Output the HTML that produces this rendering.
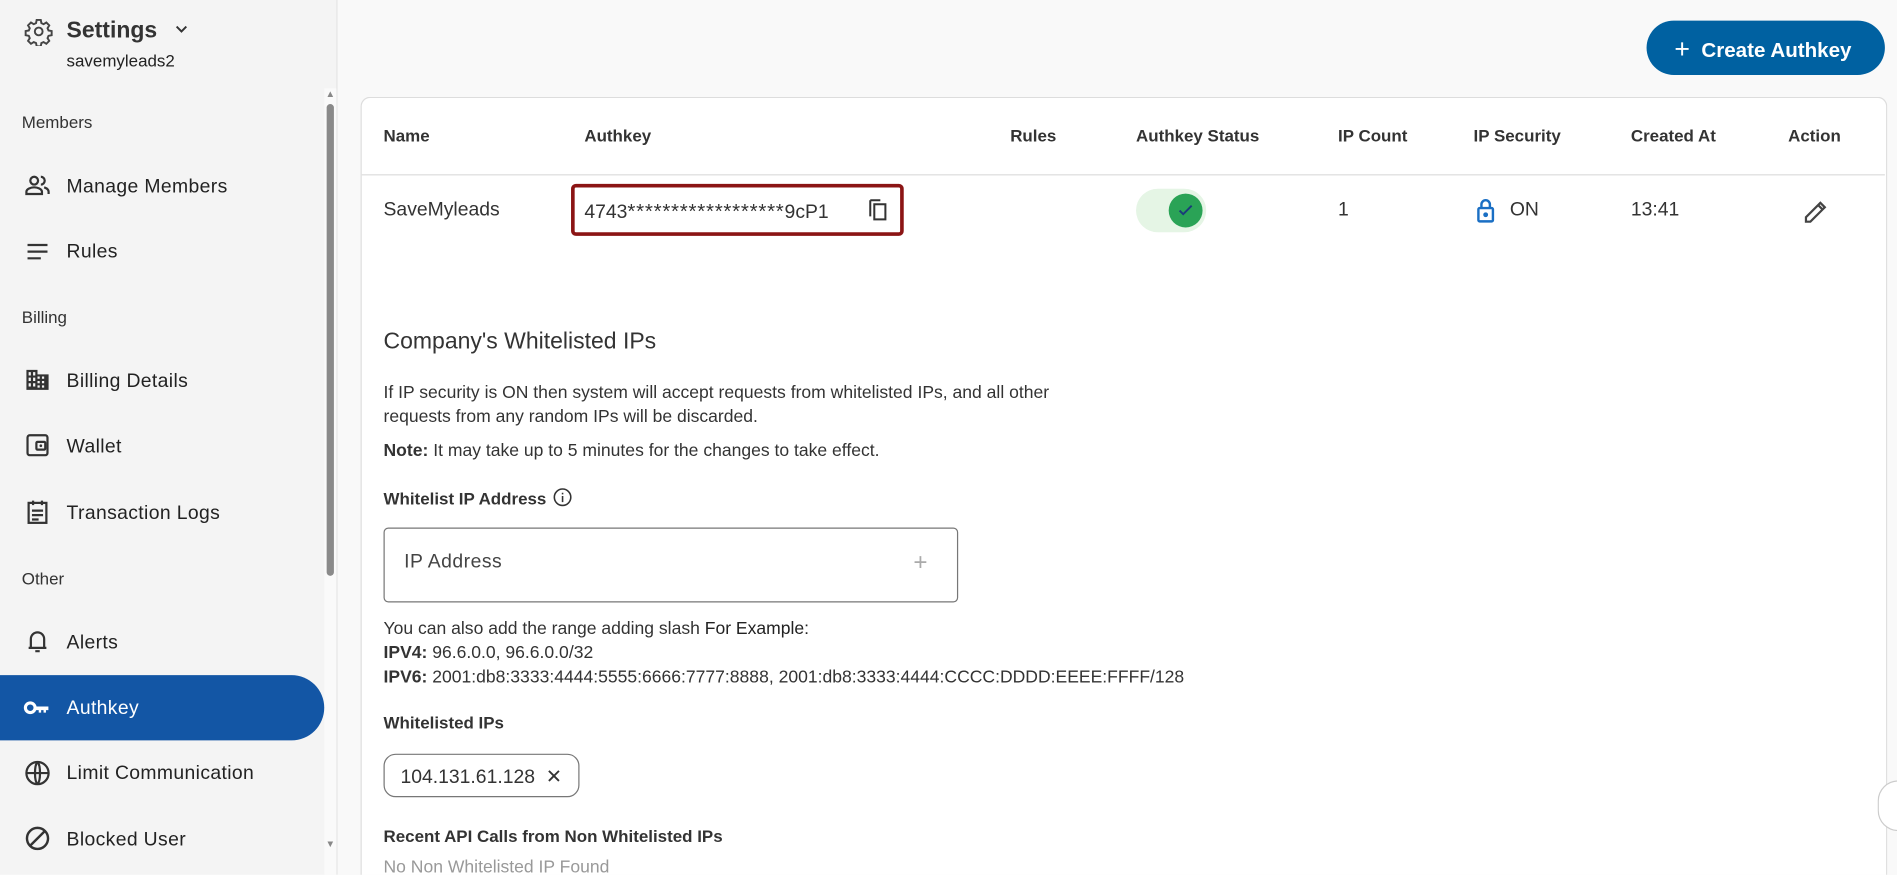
<!DOCTYPE html>
<html><head><meta charset="utf-8"><style>
html,body{margin:0;padding:0;width:1897px;height:875px;overflow:hidden;background:#f9f9f9}
#clip{position:absolute;left:0;top:0;width:1897px;height:875px;overflow:hidden}
#w{position:absolute;left:0;top:0;width:1568px;height:723px;overflow:hidden;transform:scale(1.20982);transform-origin:0 0;font-family:"Liberation Sans",sans-serif;color:#333}
.a{position:absolute;white-space:nowrap}
.sb{position:absolute;left:0;top:0;width:278px;height:723px;background:#f4f4f4;border-right:1px solid #e4e4e4}
.sec{font-size:14px;color:#333;left:18px}
.it{font-size:16px;color:#222;left:55px;letter-spacing:.3px}
.ic{position:absolute;left:20px}
.th{font-size:14px;font-weight:bold;color:#333;top:104px}
.td{font-size:16px;color:#333;top:165px}
.p{font-size:14.5px;color:#333}
</style></head><body><div id="clip"><div id="w">
<div class="sb"></div>
<svg class="a" style="left:20px;top:14px" width="24" height="24" viewBox="0 0 24 24" fill="none" stroke="#444" stroke-width="1.6"><circle cx="12" cy="12" r="3.2"/><path d="M10.3 2.5h3.4l.5 2.6 1.8.9 2.3-1.4 2.4 2.4-1.4 2.3.8 1.9 2.6.5v3.4l-2.6.5-.8 1.9 1.4 2.3-2.4 2.4-2.3-1.4-1.8.8-.5 2.7h-3.4l-.5-2.7-1.9-.8-2.3 1.4-2.4-2.4 1.4-2.3-.8-1.9-2.6-.5v-3.4l2.6-.5.8-1.9-1.4-2.3 2.4-2.4 2.3 1.4 1.9-.9z"/></svg>
<div class="a" style="left:55px;top:15px;font-size:19px;font-weight:bold;color:#333">Settings</div>
<svg class="a" style="left:144px;top:19px" width="12" height="10" viewBox="0 0 12 10"><path d="M2 3l4 4 4-4" fill="none" stroke="#333" stroke-width="1.6"/></svg>
<div class="a" style="left:55px;top:42px;font-size:14px;color:#222">savemyleads2</div>
<div class="a" style="left:268px;top:73px;width:10px;height:650px;background:#fafafa"></div>
<div class="a" style="left:270px;top:86px;width:6px;height:390px;background:#8a8a8a;border-radius:3px"></div>
<div class="a" style="left:269px;top:73px;font-size:8px;color:#888">▲</div>
<div class="a" style="left:269px;top:693px;font-size:8px;color:#888">▼</div>
<div class="a sec" style="top:93px">Members</div>
<div class="a sec" style="top:254px">Billing</div>
<div class="a sec" style="top:470px">Other</div>
<svg class="ic a" style="top:142px" width="22" height="22" viewBox="0 0 24 24"><circle cx="9" cy="8" r="3.5" fill="none" stroke="#333" stroke-width="2"/><path d="M2 20v-2c0-2.5 4-4 7-4s7 1.5 7 4v2z" fill="none" stroke="#333" stroke-width="2"/><path d="M15 4.5a3.5 3.5 0 010 7M18 14c2 .7 4 2 4 4v2" fill="none" stroke="#333" stroke-width="2"/></svg>
<div class="a it" style="top:146px">Manage Members</div>
<svg class="ic a" style="top:197px" width="22" height="22" viewBox="0 0 24 24"><path d="M3 6h18M3 12h18M3 18h12" stroke="#333" stroke-width="2"/></svg>
<div class="a it" style="top:200px">Rules</div>
<svg class="ic a" style="top:303px" width="22" height="22" viewBox="0 0 24 24" fill="#333"><path d="M2 3h10v4h10v14H2z M4 5v3h2V5zm4 0v3h2V5zM4 10v3h2v-3zm4 0v3h2v-3zM4 15v3h2v-3zm4 0v3h2v-3zm4-6v2h2V9zm0 4v2h2v-2zm4-4v2h2V9zm0 4v2h2v-2zm-4 4v2h2v-2zm4 0v2h2v-2z" fill-rule="evenodd"/></svg>
<div class="a it" style="top:307px">Billing Details</div>
<svg class="ic a" style="top:357px" width="22" height="22" viewBox="0 0 24 24"><rect x="3" y="3" width="18" height="18" rx="2" fill="none" stroke="#333" stroke-width="2"/><rect x="11" y="9" width="8" height="7" rx="1" fill="none" stroke="#333" stroke-width="2"/><circle cx="15" cy="12.5" r="1.2" fill="#333"/></svg>
<div class="a it" style="top:361px">Wallet</div>
<svg class="ic a" style="top:412px" width="22" height="22" viewBox="0 0 24 24"><rect x="4" y="4" width="16" height="18" fill="none" stroke="#333" stroke-width="2"/><path d="M8 2v4M16 2v4M7 11h10M7 15h10M7 19h6" stroke="#333" stroke-width="2"/></svg>
<div class="a it" style="top:416px">Transaction Logs</div>
<svg class="ic a" style="top:519px" width="22" height="22" viewBox="0 0 24 24"><path d="M6 18V10a6 6 0 0112 0v8M4 18h16M10 21h4" fill="none" stroke="#333" stroke-width="2"/></svg>
<div class="a it" style="top:523px">Alerts</div>
<div class="a" style="left:0;top:558px;width:268px;height:54px;background:#1356a5;border-radius:0 27px 27px 0"></div>
<svg class="ic a" style="top:573px;left:18px" width="24" height="24" viewBox="0 0 24 24"><circle cx="7" cy="12" r="4" fill="none" stroke="#fff" stroke-width="2.6"/><path d="M11 11h11v3h-2v2h-2v-2h-2v2h-2v-2h-3z" fill="#fff"/></svg>
<div class="a it" style="top:577px;color:#fff">Authkey</div>
<svg class="ic a" style="top:628px" width="22" height="22" viewBox="0 0 24 24" fill="none" stroke="#333" stroke-width="2"><circle cx="12" cy="12" r="10"/><path d="M2 12h20M12 2c3 3 3 17 0 20M12 2c-3 3-3 17 0 20"/></svg>
<div class="a it" style="top:631px">Limit Communication</div>
<svg class="ic a" style="top:682px" width="22" height="22" viewBox="0 0 24 24" fill="none" stroke="#333" stroke-width="2.2"><circle cx="12" cy="12" r="9.5"/><path d="M5 19L19 5"/></svg>
<div class="a it" style="top:686px">Blocked User</div>
<div class="a" style="left:1361px;top:17px;width:197px;height:45px;background:#0061a1;border-radius:23px"></div>
<div class="a" style="left:1384px;top:27px;font-size:17px;color:#fff;font-weight:bold"><span style="font-size:22px;font-weight:normal;position:relative;top:1px">+</span>&nbsp; Create Authkey</div>
<div class="a" style="left:298px;top:80px;width:1260px;height:643px;background:#fff;border:1px solid #ddd;border-bottom:none;border-radius:8px 8px 0 0"></div>
<div class="a" style="left:299px;top:144px;width:1259px;height:1px;background:#ddd"></div>
<div class="a th" style="left:317px">Name</div>
<div class="a th" style="left:483px">Authkey</div>
<div class="a th" style="left:835px">Rules</div>
<div class="a th" style="left:939px">Authkey Status</div>
<div class="a th" style="left:1106px">IP Count</div>
<div class="a th" style="left:1218px">IP Security</div>
<div class="a th" style="left:1348px">Created At</div>
<div class="a th" style="left:1478px">Action</div>
<div class="a td" style="left:317px">SaveMyleads</div>
<div class="a" style="left:472px;top:152px;width:269px;height:37px;border:3px solid #8b1414;border-radius:4px"></div>
<div class="a td" style="left:483px">4743<span style="letter-spacing:.6px;font-size:17px">******************</span>9cP1</div>
<svg class="a" style="left:716px;top:163px" width="20" height="20" viewBox="0 0 24 24" fill="none" stroke="#333" stroke-width="2"><path d="M4 3v16"/><path d="M4 3h10"/><rect x="8" y="7" width="11" height="15"/></svg>
<div class="a" style="left:939px;top:156px;width:58px;height:36px;background:#e5f5e5;border-radius:18px"></div>
<div class="a" style="left:966px;top:160px;width:28px;height:28px;background:#2aa356;border-radius:50%"></div>
<svg class="a" style="left:972px;top:166px" width="16" height="16" viewBox="0 0 16 16"><path d="M3 8l3 3 7-7" fill="none" stroke="#1a3b7a" stroke-width="1.6"/></svg>
<div class="a td" style="left:1106px">1</div>
<svg class="a" style="left:1220px;top:163px" width="16" height="22" viewBox="0 0 16 22" fill="none" stroke="#1a6fc4" stroke-width="2"><rect x="2" y="9" width="12" height="11" rx="1"/><path d="M4.5 9V6a3.5 3.5 0 017 0v3"/><circle cx="8" cy="14.5" r="1" fill="#1a6fc4"/></svg>
<div class="a td" style="left:1248px">ON</div>
<div class="a td" style="left:1348px">13:41</div>
<svg class="a" style="left:1490px;top:164px" width="22" height="22" viewBox="0 0 24 24"><path d="M3 21v-4L16 4l4 4L7 21zM14 6l4 4" fill="none" stroke="#444" stroke-width="2"/></svg>
<div class="a" style="left:317px;top:272px;font-size:19px;color:#333">Company's Whitelisted IPs</div>
<div class="a p" style="left:317px;top:315px;line-height:20px">If IP security is ON then system will accept requests from whitelisted IPs, and all other<br>requests from any random IPs will be discarded.</div>
<div class="a p" style="left:317px;top:365px"><b>Note:</b> It may take up to 5 minutes for the changes to take effect.</div>
<div class="a p" style="left:317px;top:404px;font-weight:bold;font-size:14px">Whitelist IP Address</div>
<svg class="a" style="left:457px;top:403px" width="16" height="16" viewBox="0 0 16 16" fill="none" stroke="#333" stroke-width="1.3"><circle cx="8" cy="8" r="6.8"/><path d="M8 7v5M8 4.3v1.3"/></svg>
<div class="a" style="left:317px;top:436px;width:473px;height:60px;border:1px solid #777;border-radius:4px"></div>
<div class="a" style="left:334px;top:456px;font-size:16px;color:#444;letter-spacing:.4px">IP Address</div>
<div class="a" style="left:755px;top:454px;font-size:20px;color:#aaa">+</div>
<div class="a p" style="left:317px;top:510px;line-height:20px">You can also add the range adding slash <span style="color:#222">For Example:</span><br><b>IPV4:</b> 96.6.0.0, 96.6.0.0/32<br><b>IPV6:</b> 2001:db8:3333:4444:5555:6666:7777:8888, 2001:db8:3333:4444:CCCC:DDDD:EEEE:FFFF/128</div>
<div class="a p" style="left:317px;top:589px;font-weight:bold;font-size:14px">Whitelisted IPs</div>
<div class="a" style="left:317px;top:623px;width:160px;height:34px;border:1px solid #777;border-radius:10px"></div>
<div class="a" style="left:331px;top:632px;font-size:16px;color:#333">104.131.61.128 &nbsp;✕</div>
<div class="a p" style="left:317px;top:683px;font-weight:bold;font-size:14px">Recent API Calls from Non Whitelisted IPs</div>
<div class="a p" style="left:317px;top:709px;color:#999;height:14px;overflow:hidden">No Non Whitelisted IP Found</div>
<div class="a" style="left:1552px;top:645px;width:16px;height:40px;border-radius:20px 0 0 20px;background:#fff;border:1px solid #ccc;border-right:none"></div>
</div></div></body></html>
